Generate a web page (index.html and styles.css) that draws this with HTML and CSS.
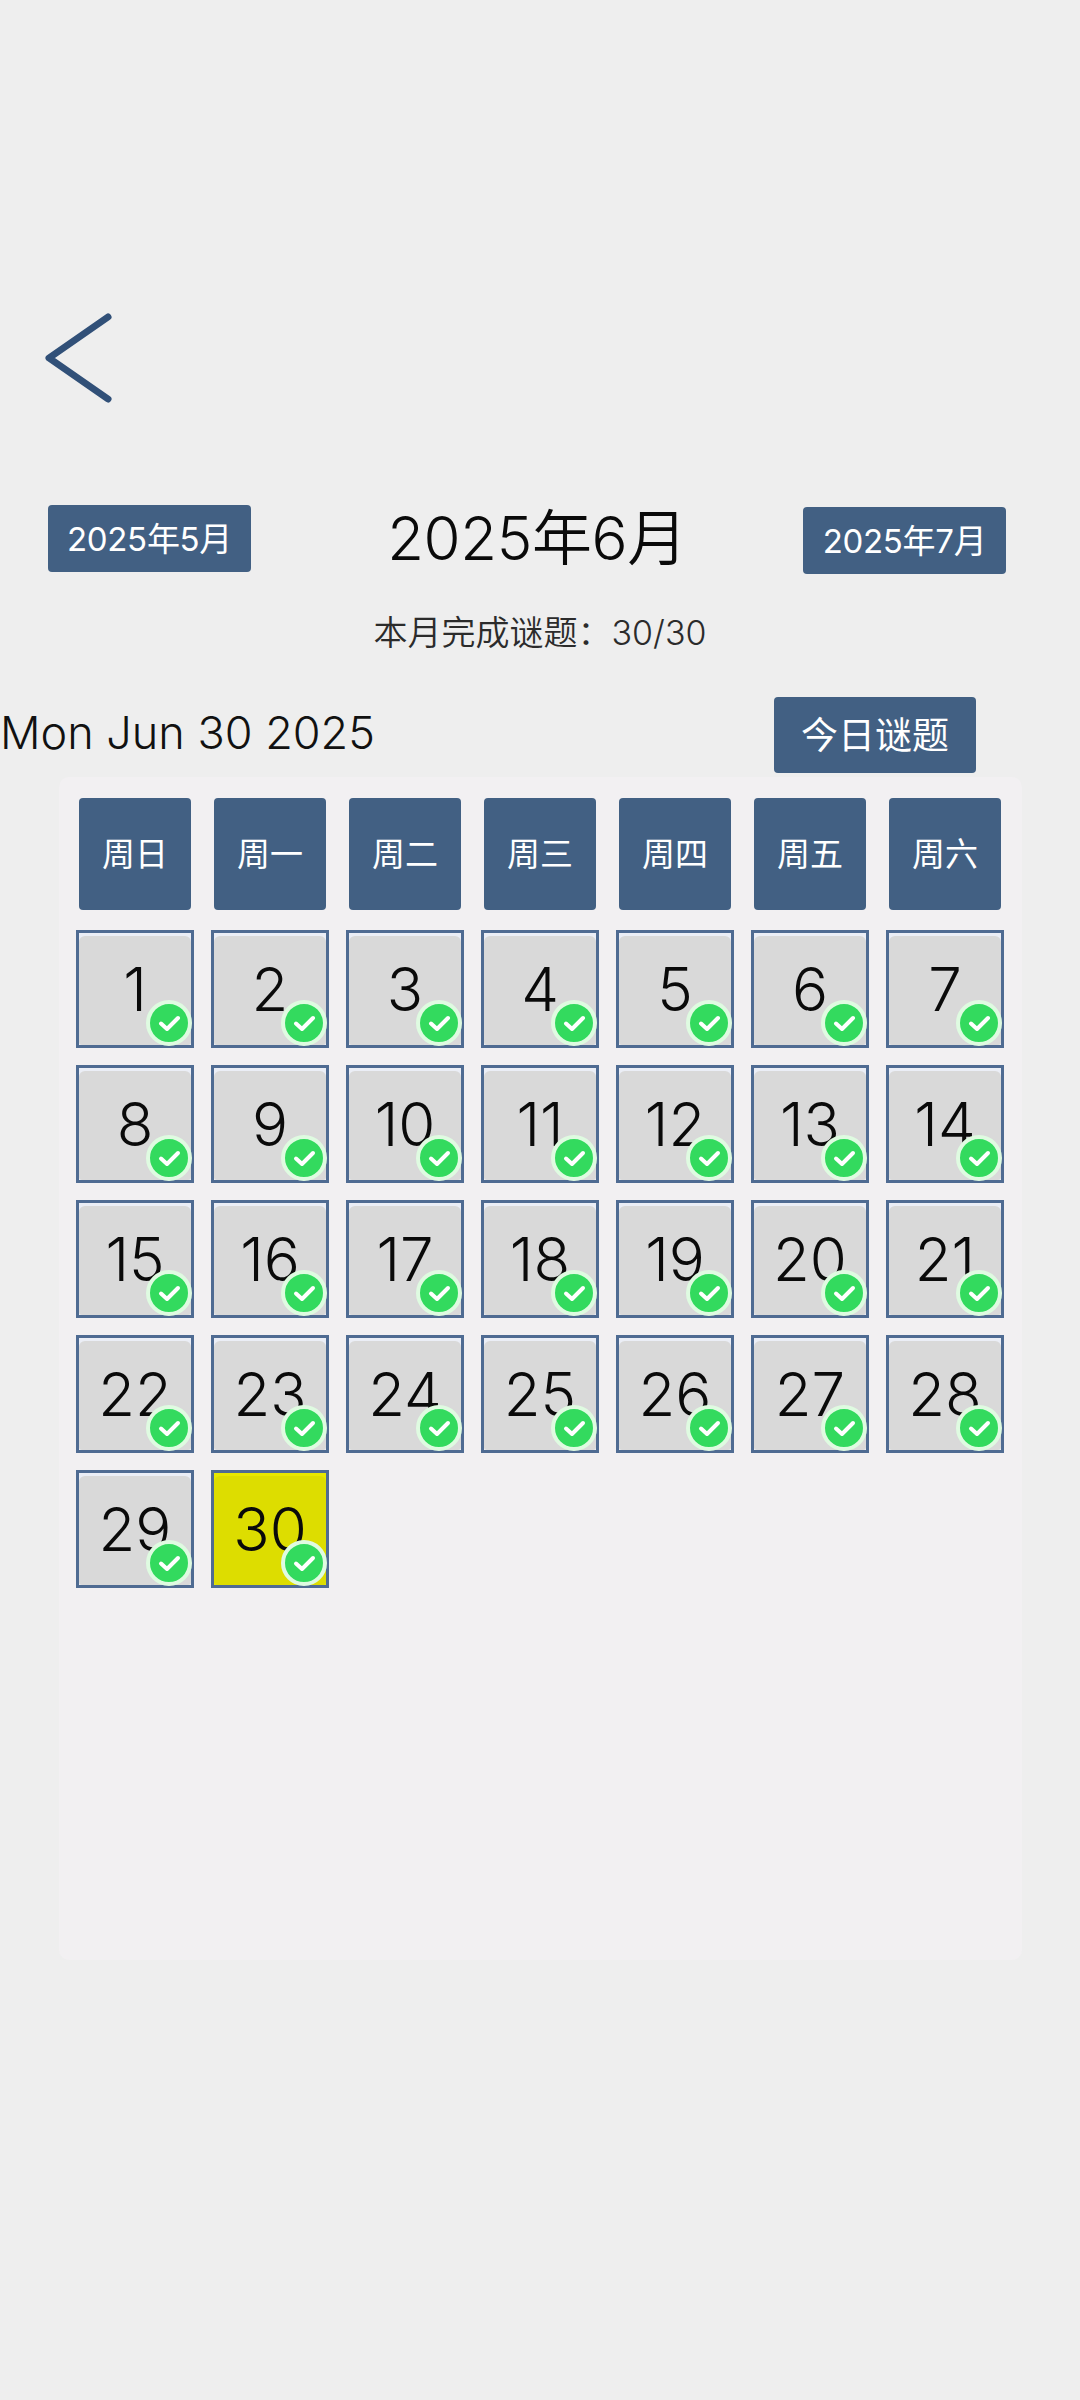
FILE: index.html
```html
<!DOCTYPE html>
<html lang="zh-CN">
<head>
    <meta charset="UTF-8">
    <meta name="viewport" content="width=device-width, initial-scale=1.0">
    <title>谜题日历</title>
    <link rel="stylesheet" href="styles.css">
</head>
<body>
    <svg class="sprite" width="0" height="0">
        <symbol id="check" viewBox="0 0 38 38">
            <path d="M11 19.5l6 5.5 11-11" fill="none" stroke="#fff" stroke-width="4" stroke-linecap="round" stroke-linejoin="round"/>
        </symbol>
    </svg>

    <div class="page">
        <svg class="back" width="80" height="100" viewBox="0 0 80 100">
            <path d="M68 9L9 50l59 41" fill="none" stroke="#315078" stroke-width="7" stroke-linecap="round" stroke-linejoin="round"/>
        </svg>

        <div class="month-nav">
            <div class="btn month-btn">2025年5月</div>
            <div class="month-title">2025年6月</div>
            <div class="btn month-btn next">2025年7月</div>
        </div>

        <div class="progress">本月完成谜题：30/30</div>

        <div class="today-row">
            <div class="today-date">Mon Jun 30 2025</div>
            <div class="btn today-btn">今日谜题</div>
        </div>

        <div class="calendar">
            <div class="btn weekday">周日</div>
            <div class="btn weekday">周一</div>
            <div class="btn weekday">周二</div>
            <div class="btn weekday">周三</div>
            <div class="btn weekday">周四</div>
            <div class="btn weekday">周五</div>
            <div class="btn weekday">周六</div>

            <div class="day"><div class="face">1</div><span class="badge"><svg><use href="#check"/></svg></span></div>
            <div class="day"><div class="face">2</div><span class="badge"><svg><use href="#check"/></svg></span></div>
            <div class="day"><div class="face">3</div><span class="badge"><svg><use href="#check"/></svg></span></div>
            <div class="day"><div class="face">4</div><span class="badge"><svg><use href="#check"/></svg></span></div>
            <div class="day"><div class="face">5</div><span class="badge"><svg><use href="#check"/></svg></span></div>
            <div class="day"><div class="face">6</div><span class="badge"><svg><use href="#check"/></svg></span></div>
            <div class="day"><div class="face">7</div><span class="badge"><svg><use href="#check"/></svg></span></div>
            <div class="day"><div class="face">8</div><span class="badge"><svg><use href="#check"/></svg></span></div>
            <div class="day"><div class="face">9</div><span class="badge"><svg><use href="#check"/></svg></span></div>
            <div class="day"><div class="face">10</div><span class="badge"><svg><use href="#check"/></svg></span></div>
            <div class="day"><div class="face">11</div><span class="badge"><svg><use href="#check"/></svg></span></div>
            <div class="day"><div class="face">12</div><span class="badge"><svg><use href="#check"/></svg></span></div>
            <div class="day"><div class="face">13</div><span class="badge"><svg><use href="#check"/></svg></span></div>
            <div class="day"><div class="face">14</div><span class="badge"><svg><use href="#check"/></svg></span></div>
            <div class="day"><div class="face">15</div><span class="badge"><svg><use href="#check"/></svg></span></div>
            <div class="day"><div class="face">16</div><span class="badge"><svg><use href="#check"/></svg></span></div>
            <div class="day"><div class="face">17</div><span class="badge"><svg><use href="#check"/></svg></span></div>
            <div class="day"><div class="face">18</div><span class="badge"><svg><use href="#check"/></svg></span></div>
            <div class="day"><div class="face">19</div><span class="badge"><svg><use href="#check"/></svg></span></div>
            <div class="day"><div class="face">20</div><span class="badge"><svg><use href="#check"/></svg></span></div>
            <div class="day"><div class="face">21</div><span class="badge"><svg><use href="#check"/></svg></span></div>
            <div class="day"><div class="face">22</div><span class="badge"><svg><use href="#check"/></svg></span></div>
            <div class="day"><div class="face">23</div><span class="badge"><svg><use href="#check"/></svg></span></div>
            <div class="day"><div class="face">24</div><span class="badge"><svg><use href="#check"/></svg></span></div>
            <div class="day"><div class="face">25</div><span class="badge"><svg><use href="#check"/></svg></span></div>
            <div class="day"><div class="face">26</div><span class="badge"><svg><use href="#check"/></svg></span></div>
            <div class="day"><div class="face">27</div><span class="badge"><svg><use href="#check"/></svg></span></div>
            <div class="day"><div class="face">28</div><span class="badge"><svg><use href="#check"/></svg></span></div>
            <div class="day"><div class="face">29</div><span class="badge"><svg><use href="#check"/></svg></span></div>
            <div class="day current"><div class="face">30</div><span class="badge"><svg><use href="#check"/></svg></span></div>
        </div>
    </div>
</body>
</html>
```

FILE: styles.css
```css
body {
    margin: 0;
    background: #eeeeee;
    color: #111;
    font-family: Inter, "Noto Sans CJK SC", sans-serif;
    font-weight: 350;
}
.sprite {
    position: absolute;
}
.page {
    height: 2400px;
    padding-top: 308px;
    box-sizing: border-box;
    overflow: hidden;
}
.back {
    display: block;
    margin-left: 40px;
}
.btn {
    display: flex;
    align-items: center;
    justify-content: center;
    padding-bottom: 4px;
    box-sizing: border-box;
    background: #426083;
    color: #fff;
    border-radius: 4px;
    font-weight: 400;
}
.month-nav {
    display: flex;
    justify-content: space-between;
    margin-top: 97px;
    padding: 0 74px 0 48px;
}
.month-btn {
    width: 203px;
    height: 67px;
    font-size: 33px;
    letter-spacing: -0.3px;
}
.month-btn.next {
    margin-top: 2px;
}
.month-title {
    margin-left: 20px;
    font-size: 60px;
    letter-spacing: -0.4px;
    line-height: 67px;
    color: #0a0a0a;
}
.progress {
    margin-top: 37px;
    text-align: center;
    font-size: 34px;
    line-height: 44px;
    color: #2b2b2b;
}
.today-row {
    display: flex;
    justify-content: space-between;
    align-items: center;
    margin-top: 42px;
    padding-right: 104px;
}
.today-date {
    margin-bottom: 6px;
    font-size: 45px;
    color: #111;
}
.today-btn {
    width: 202px;
    height: 76px;
    font-size: 37px;
}
.calendar {
    display: grid;
    grid-template-columns: repeat(7, 118px);
    grid-auto-rows: 118px;
    gap: 17px;
    align-content: start;
    box-sizing: border-box;
    width: 963px;
    height: 1183px;
    margin: 4px 0 0 59px;
    padding: 18px 0 0 17px;
    background: #f2f0f2;
    border-radius: 10px;
}
.weekday {
    margin: 3px;
    font-size: 33px;
}
.day {
    position: relative;
    box-sizing: border-box;
    display: flex;
    padding-top: 3px;
    border: 3px solid #4f6b92;
    background: #ebeef6;
}
.face {
    flex: 1;
    display: flex;
    align-items: center;
    justify-content: center;
    padding-bottom: 3px;
    background: #d9d9d9;
    border-radius: 6px 6px 3px 3px;
    font-size: 60px;
    color: #0a0a0a;
}
.day.current {
    background: #e8e800;
}
.day.current .face {
    background: #dddd00;
}
.badge {
    position: absolute;
    right: -1px;
    bottom: -1px;
    box-sizing: border-box;
    width: 46px;
    height: 46px;
    border: 4px solid #dffbe1;
    border-radius: 50%;
    background: #33da5e;
}
.badge svg {
    display: block;
    width: 38px;
    height: 38px;
}
```
